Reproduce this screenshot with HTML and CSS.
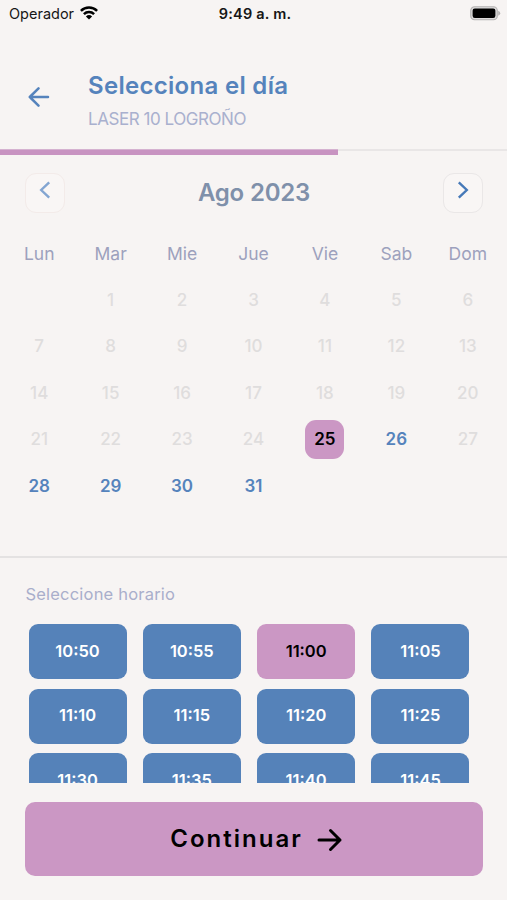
FILE: index.html
```html
<!DOCTYPE html>
<html lang="es">
<head>
<meta charset="utf-8">
<meta name="viewport" content="width=device-width, initial-scale=1">
<title>Selecciona el día</title>
<link rel="stylesheet" href="styles.css">
</head>
<body>
<div class="status">
  <div class="carrier"><span>Operador</span>
    <svg class="wifi" viewBox="0 0 18 14" width="18" height="14"><g fill="none" stroke="#000" stroke-width="2.5"><path d="M.9 4.9a11.6 11.6 0 0 1 16.2 0"/><path d="M3.9 8.2a7.3 7.3 0 0 1 10.2 0"/></g><path d="M9 13.6 5.9 10.5a4.5 4.5 0 0 1 6.2 0z"/></svg>
  </div>
  <span class="clock">9:49 a. m.</span>
  <svg class="battery" viewBox="0 0 31 15" width="31" height="15"><rect x=".75" y=".75" width="26.5" height="13" rx="3.8" fill="#dedcdc" stroke="#b4b2b2" stroke-width="1.2"/><rect x="2.6" y="2.6" width="22.8" height="9.3" rx="2.2"/><path d="M28.2 4.8q2 .8 2 2.5t-2 2.5z" fill="#b4b2b2"/></svg>
</div>
<header class="header">
  <svg class="back" viewBox="0 0 22 20" width="22" height="20"><path d="M10.5 1.4 1.8 10l8.7 8.6M1.8 10H20"/></svg>
  <div>
    <h1 class="title">Selecciona el día</h1>
    <p class="subtitle">LASER 10 LOGROÑO</p>
  </div>
</header>
<div class="progress"><div class="progress-value"></div></div>
<section class="calendar">
  <div class="month-nav">
    <button class="nav prev" aria-label="Anterior"><svg viewBox="0 0 12 18" width="12" height="18"><path d="M10.2 1.3 2.2 9l8 7.7"/></svg></button>
    <h2 class="month">Ago 2023</h2>
    <button class="nav next" aria-label="Siguiente"><svg viewBox="0 0 12 18" width="12" height="18"><path d="m1.8 1.3 8 7.7-8 7.7"/></svg></button>
  </div>
  <div class="weekdays"><span>Lun</span><span>Mar</span><span>Mie</span><span>Jue</span><span>Vie</span><span>Sab</span><span>Dom</span></div>
  <div class="days">
    <span></span><span>1</span><span>2</span><span>3</span><span>4</span><span>5</span><span>6</span>
    <span>7</span><span>8</span><span>9</span><span>10</span><span>11</span><span>12</span><span>13</span>
    <span>14</span><span>15</span><span>16</span><span>17</span><span>18</span><span>19</span><span>20</span>
    <span>21</span><span>22</span><span>23</span><span>24</span><span class="selected">25</span><span class="open">26</span><span>27</span>
    <span class="open">28</span><span class="open">29</span><span class="open">30</span><span class="open">31</span>
  </div>
</section>
<section class="schedule">
  <h3 class="label">Seleccione horario</h3>
  <div class="slots">
    <button class="slot">10:50</button><button class="slot">10:55</button><button class="slot active">11:00</button><button class="slot">11:05</button>
    <button class="slot">11:10</button><button class="slot">11:15</button><button class="slot">11:20</button><button class="slot">11:25</button>
    <button class="slot">11:30</button><button class="slot">11:35</button><button class="slot">11:40</button><button class="slot">11:45</button>
  </div>
</section>
<button class="continue"><span>Continuar</span><svg viewBox="0 0 26 24" width="26" height="24"><path d="M2 12h21M13.5 2.5 23 12l-9.5 9.5"/></svg></button>
</body>
</html>
```
FILE: styles.css
```css
* { box-sizing: border-box; }

body {
  margin: 0;
  width: 507px;
  height: 900px;
  overflow: hidden;
  display: flex;
  flex-direction: column;
  background: #f7f4f3;
  font-family: Inter, "Liberation Sans", sans-serif;
}

h1, h2, h3, p { margin: 0; }
button { border: 0; padding: 0; font: inherit; }
svg { flex: none; }

.status {
  height: 28px;
  padding: 0 6px 2px 9px;
  display: grid;
  grid-template-columns: 1fr auto 1fr;
  align-items: center;
  font-size: 14.5px;
  color: #161616;
}
.carrier { display: flex; align-items: center; gap: 6px; }
.clock { font-weight: 600; letter-spacing: .2px; }
.battery { justify-self: end; }

.header {
  height: 121px;
  padding: 42px 0 0 28px;
  display: flex;
  gap: 38px;
}
.back { margin-top: 17px; }
.back path, .nav path, .continue path {
  fill: none;
  stroke: #5583bc;
  stroke-width: 2.5;
  stroke-linecap: round;
  stroke-linejoin: round;
}
.title { font-size: 24px; line-height: 32px; font-weight: 600; letter-spacing: .3px; color: #5583bc; }
.subtitle { margin-top: 6px; font-size: 17px; line-height: 22px; letter-spacing: -.45px; color: #a9b0ce; }

.progress { height: 6px; border-top: 2px solid #e9e6e6; }
.progress-value { width: 338px; height: 6px; margin-top: -2px; background: #c893c1; border-top: 1px solid #d5b2d0; }

.calendar { height: 401px; padding-top: 18px; }
.month-nav { height: 40px; padding: 0 24px 0 25px; display: flex; justify-content: space-between; align-items: center; }
.nav {
  width: 40px;
  height: 40px;
  display: flex;
  align-items: center;
  justify-content: center;
  padding-bottom: 6px;
  border: 1.5px solid #eae7e7;
  border-radius: 11px;
  background: #f9f6f5;
}
.nav path { stroke-width: 2.4; stroke-linecap: butt; stroke-linejoin: miter; }
.nav.prev { border-color: #f3ebe9; }
.nav.prev path { stroke: #83a5d1; }
.nav.next path { stroke: #4679b8; }
.month { margin-top: -1px; font-size: 24px; line-height: 32px; font-weight: 600; letter-spacing: -.2px; color: #7f90aa; }
.weekdays, .days { display: grid; grid-template-columns: repeat(7, 1fr); padding: 0 3.5px; }
.weekdays { margin-top: 28px; font-size: 17.5px; line-height: 26px; text-align: center; color: #9da1bd; }
.days { margin-top: 14px; grid-auto-rows: 39px; row-gap: 7.4px; justify-items: center; }
.days span {
  width: 39px;
  border-radius: 11px;
  text-align: center;
  line-height: 39px;
  font-size: 17px;
  font-weight: 500;
  color: #dfdddd;
}
.days .open { font-weight: 600; color: #5583bc; }
.days .selected { font-weight: 600; color: #000; background: #cb97c4; }

.schedule { height: 227px; overflow: hidden; border-top: 2px solid #e4e2e2; padding: 25px 37.5px 0 28.5px; }
.label { margin-left: -3px; font-size: 16.5px; line-height: 22px; font-weight: 400; letter-spacing: .2px; color: #a9aecb; }
.slots { margin-top: 19px; display: grid; grid-template-columns: repeat(4, 98px); justify-content: space-between; grid-auto-rows: 55px; row-gap: 9.7px; }
.slot { padding-bottom: 2px; border-radius: 9px; background: #5582b9; color: #fff; font-size: 16.5px; font-weight: 600; }
.slot.active { background: #cb97c4; color: #000; }

.continue {
  width: 458px;
  height: 74px;
  margin: 19px 0 0 25px;
  padding: 0 0 2px 5px;
  display: flex;
  align-items: center;
  justify-content: center;
  gap: 14px;
  border-radius: 10px;
  background: #cb97c4;
  color: #000;
  font-size: 24px;
  font-weight: 600;
  letter-spacing: 2px;
}
.continue path { stroke: #000; stroke-width: 3; }
.continue svg { margin-top: 3px; }
```
